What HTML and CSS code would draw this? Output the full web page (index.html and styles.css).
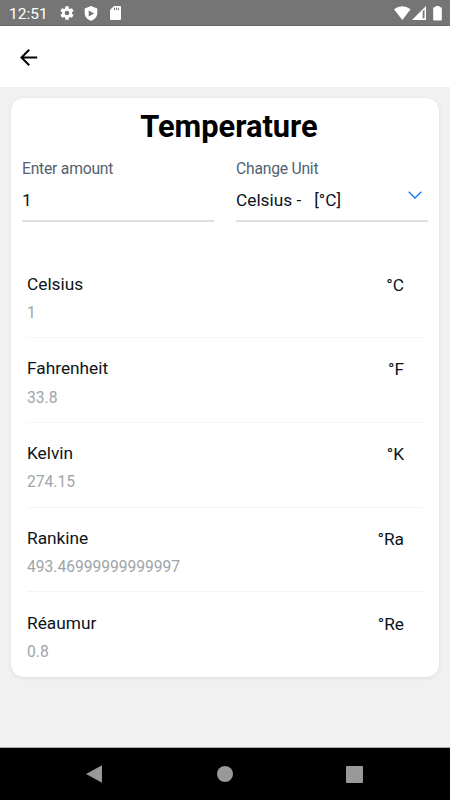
FILE: index.html
```html
<!DOCTYPE html>
<html lang="en">
<head>
<meta charset="utf-8">
<title>Temperature</title>
<link rel="stylesheet" href="styles.css">
</head>
<body>
<div class="status">
  <span class="clock">12:51</span>
  <svg class="gear" width="16" height="16" viewBox="0 0 24 24"><path fill="#fff" d="M19.43 12.98c.04-.32.07-.64.07-.98s-.03-.66-.07-.98l2.110-1.650c.19-.15.24-.42.12-.64l-2-3.460c-.12-.22-.39-.3-.61-.22l-2.490 1c-.52-.4-1.080-.73-1.690-.98l-.38-2.650A.49.49 0 0 0 14 2h-4c-.25 0-.46.18-.49.42l-.38 2.650c-.61.25-1.170.59-1.690.98l-2.490-1c-.23-.09-.49 0-.61.22l-2 3.460c-.13.22-.07.49.12.64l2.110 1.650c-.04.32-.07.65-.07.98s.03.66.07.98l-2.110 1.650c-.19.15-.24.42-.12.64l2 3.460c.12.22.39.3.61.22l2.490-1c.52.4 1.080.73 1.690.98l.38 2.650c.03.24.24.42.49.42h4c.25 0 .46-.18.49-.42l.38-2.650c.61-.25 1.170-.59 1.690-.98l2.490 1c.23.09.49 0 .61-.22l2-3.460c.12-.22.07-.49-.12-.64zM12 15.500a3.500 3.500 0 1 1 0-7 3.500 3.500 0 0 1 0 7z"/></svg>
  <svg class="shield" width="14" height="15" viewBox="0 0 14 15"><path fill="#fff" d="M7 0l6.300 2.400v4.700c0 3.600-2.500 6.500-6.300 7.700C3.200 13.600.7 10.700.7 7.100V2.400z"/><path fill="#757575" d="M4.700 4.400v6l5.400-3z"/></svg>
  <svg class="card-icon" width="11" height="14" viewBox="0 0 11 14"><path fill="#fff" d="M4 0h6a1 1 0 0 1 1 1v12a1 1 0 0 1-1 1H1a1 1 0 0 1-1-1V4z"/><path stroke="#757575" d="M4.500 1.700v2.500M6.500 1.700v2.500M8.500 1.700v2.500"/></svg>
  <span class="grow"></span>
  <svg width="17" height="14" viewBox="0 0 17 14"><path fill="#fff" d="M8.300 14L0 3.300Q8.300-2.900 16.600 3.300z"/></svg>
  <svg class="signal" width="14" height="14" viewBox="0 0 14 14"><path fill="#fff" d="M14 0v14H0z"/><path fill="#757575" d="M12.500 3.500V12.200H10V6z"/><path fill="#d8d8d8" d="M11 5v7.200h-1V6z"/></svg>
  <svg class="battery" width="9" height="15" viewBox="0 0 9 15"><path fill="#fff" d="M2.500 0h4v1.300h1.700q.6 0 .6.700v11.800q0 .8-.8.800H1q-.8 0-.8-.8V2q0-.7.600-.7h1.700z"/></svg>
</div>
<header class="header">
  <svg width="18" height="17" viewBox="0 0 18 17" fill="none" stroke="#000" stroke-width="2"><path d="M17.200 8.500H1.800M9.200.8L1.500 8.500l7.700 7.700"/></svg>
</header>
<main class="main">
  <section class="card">
    <h1 class="title">Temperature</h1>
    <div class="form">
      <div class="field"><label class="label">Enter amount</label><div class="value">1</div></div>
      <div class="field"><label class="label">Change Unit</label><div class="value"><span>Celsius -</span><span class="unit">[°C]</span><svg class="chevron" width="14" height="8" viewBox="0 0 14 8" fill="none" stroke="#0d78ff" stroke-width="1.300"><path d="M.7.8L7 7 13.300.8"/></svg></div></div>
    </div>
    <ul class="list">
      <li class="row"><div><div class="name">Celsius</div><div class="amount">1</div></div><div class="symbol">°C</div></li>
      <li class="row"><div><div class="name">Fahrenheit</div><div class="amount">33.8</div></div><div class="symbol">°F</div></li>
      <li class="row"><div><div class="name">Kelvin</div><div class="amount">274.15</div></div><div class="symbol">°K</div></li>
      <li class="row"><div><div class="name">Rankine</div><div class="amount">493.46999999999997</div></div><div class="symbol">°Ra</div></li>
      <li class="row"><div><div class="name">Réaumur</div><div class="amount">0.8</div></div><div class="symbol">°Re</div></li>
    </ul>
  </section>
</main>
<nav class="nav">
  <svg width="17" height="18" viewBox="0 0 17 18"><path fill="#999" d="M16 .2v17.600L0 9z"/></svg>
  <svg width="16" height="16" viewBox="0 0 16 16"><circle fill="#999" cx="8" cy="8" r="8"/></svg>
  <svg width="17" height="17" viewBox="0 0 17 17"><rect fill="#999" width="17" height="17" rx="1"/></svg>
</nav>
</body>
</html>
```

FILE: styles.css
```css
* { box-sizing: border-box; }
body { margin: 0; height: 800px; display: flex; flex-direction: column; background: #f1f1f1; font-family: Roboto, "Liberation Sans", sans-serif; color: #0c141b; overflow: hidden; }
svg { display: block; flex: none; }
.status { height: 26px; flex: none; display: flex; align-items: center; padding: 0 8px 0 9px; background: #757575; border-bottom: 1px solid #686868; }
.clock { width: 50px; font-size: 15.500px; line-height: 26px; color: #fff; padding-top: 2px; }
.shield { margin: 1px 0 0 9px; }
.card-icon { margin-left: 12px; }
.grow { flex: 1; }
.signal { margin-left: 1px; }
.battery { margin: 1px 0 0 7px; }
.header { height: 61px; flex: none; display: flex; align-items: center; padding: 1px 0 0 20px; background: #fff; }
.main { flex: 1; padding: 11px; }
.card { height: 579px; padding: 0 11px; background: #fff; border-radius: 13px; box-shadow: 0 1px 4px rgba(0, 0, 0, .09); }
.title { margin: 0; padding: 9px 0 0 8px; font-size: 30.800px; line-height: 40px; text-align: center; color: #000; }
.form { display: flex; gap: 22px; padding-top: 12px; }
.field { flex: 1; height: 63px; border-bottom: 2px solid #dce0e0; }
.label { display: block; font-size: 15.700px; letter-spacing: -.23px; line-height: 20px; color: #536270; }
.value { display: flex; font-size: 17.300px; line-height: 24px; padding-top: 9px; }
.unit { margin-left: 13px; }
.chevron { margin: 3px 6px 0 auto; }
.list { list-style: none; margin: 0; padding: 31.250px 5px 0; }
.row { display: flex; justify-content: space-between; height: 84.750px; padding: 18.250px 19px 0 0; border-bottom: 1px solid #f5f5f5; }
.row:last-child { border-bottom: 0; }
.name, .symbol { font-size: 17.300px; line-height: 24px; }
.symbol { padding-top: 1px; }
.amount { margin-top: 6.250px; font-size: 15.600px; line-height: 22px; color: #a0a5a9; }
.nav { height: 53px; flex: none; display: flex; align-items: center; justify-content: space-between; padding: 0 87px 0 86px; background: #000; border-top: 1px solid #aaa; }
```
